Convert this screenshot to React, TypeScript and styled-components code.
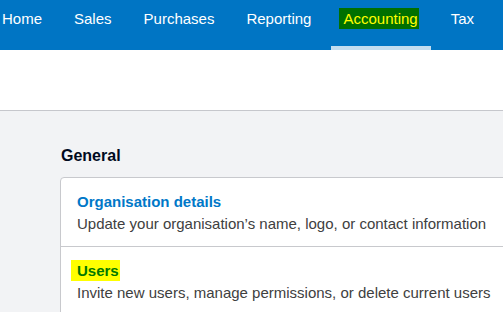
import React from "react";
import styled, { createGlobalStyle } from "styled-components";

const Global = createGlobalStyle`
  html, body { margin: 0; padding: 0; overflow: hidden; }
  body {
    font-family: "Liberation Sans", Arial, sans-serif;
    background: #f2f3f5;
    width: 503px;
    height: 312px;
  }
`;

const Page = styled.div`
  display: flex;
  flex-direction: column;
  width: 503px;
  height: 312px;
  overflow: hidden;
`;

const NavBar = styled.nav`
  background: #0075c4;
  height: 50px;
  display: flex;
  flex-shrink: 0;
`;

const NavList = styled.ul`
  list-style: none;
  margin: 0 0 0 -10px;
  padding: 0;
  display: flex;
  gap: 8px;
`;

const Tab = styled.li<{ $active?: boolean }>`
  box-sizing: border-box;
  height: 50px;
  padding: 10px 12px 0;
  font-size: 15px;
  line-height: 17px;
  color: #ffffff;
  white-space: nowrap;
  border-bottom: 4px solid ${(p) => (p.$active ? "#c2ddf0" : "transparent")};
`;

const NavMark = styled.span`
  background: #007000;
  color: #ffff00;
  padding: 2px 1px 2px 4px;
  margin-left: -4px;
`;

const SubHeader = styled.div`
  height: 60px;
  background: #ffffff;
  border-bottom: 1px solid #c6c7cc;
  flex-shrink: 0;
`;

const Content = styled.main`
  padding: 35px 0 0 60px;
`;

const SectionTitle = styled.h2`
  margin: 0 0 12px 1px;
  font-size: 16px;
  line-height: 19px;
  font-weight: bold;
  color: #000a1e;
`;

const Card = styled.div`
  width: 560px;
  background: #ffffff;
  border: 1px solid #c8c9cd;
  border-radius: 4px;
`;

const Row = styled.div`
  padding: 13px 16px 11px;
  border-top: 1px solid #c8c9cd;
  &:first-child { border-top: none; }
`;

const RowTitle = styled.div`
  font-size: 15px;
  line-height: 22px;
  font-weight: bold;
  color: #0078c8;
`;

const RowMark = styled.span`
  background: #ffff00;
  color: #007800;
  padding: 2px 1px 2px 6px;
  margin-left: -6px;
`;

const RowDesc = styled.div`
  font-size: 15px;
  line-height: 22px;
  color: #404040;
  white-space: nowrap;
`;

const tabs = ["Home", "Sales", "Purchases", "Reporting", "Accounting", "Tax"];

export default function App() {
  return (
    <>
      <Global />
      <Page>
        <NavBar>
          <NavList>
            {tabs.map((t) => (
              <Tab key={t} $active={t === "Accounting"}>
                {t === "Accounting" ? <NavMark>{t}</NavMark> : t}
              </Tab>
            ))}
          </NavList>
        </NavBar>
        <SubHeader />
        <Content>
          <SectionTitle>General</SectionTitle>
          <Card>
            <Row>
              <RowTitle>Organisation details</RowTitle>
              <RowDesc>Update your organisation’s name, logo, or contact information</RowDesc>
            </Row>
            <Row>
              <RowTitle>
                <RowMark>Users</RowMark>
              </RowTitle>
              <RowDesc>Invite new users, manage permissions, or delete current users</RowDesc>
            </Row>
          </Card>
        </Content>
      </Page>
    </>
  );
}
